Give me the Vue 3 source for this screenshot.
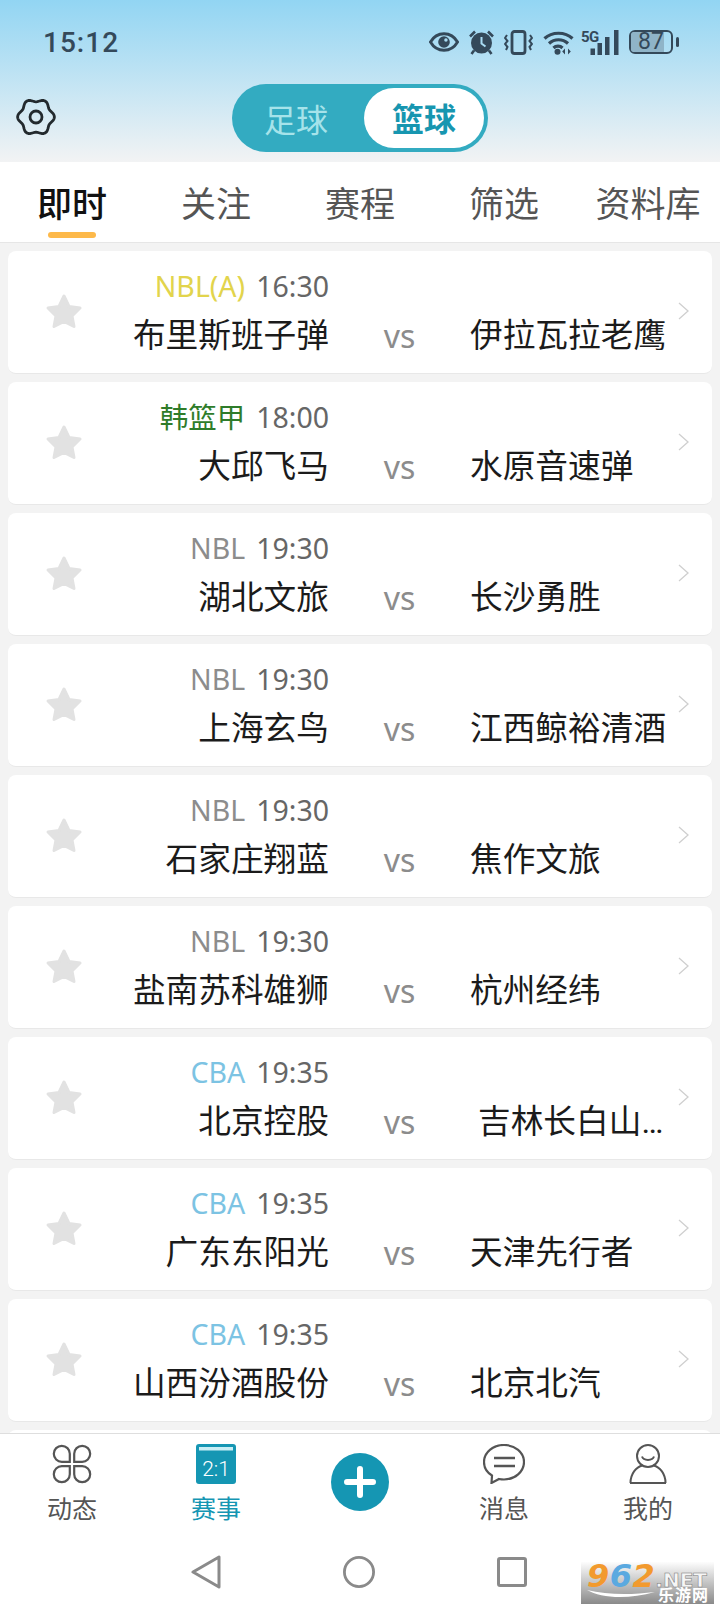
<script setup>
const tabs = ['即时', '关注', '赛程', '筛选', '资料库']

const matches = [
  { league: 'NBL(A)', color: '#e2d44c', time: '16:30', home: '布里斯班子弹', away: '伊拉瓦拉老鹰' },
  { league: '韩篮甲', color: '#2f7c2a', time: '18:00', home: '大邱飞马', away: '水原音速弹' },
  { league: 'NBL', color: '#8c8c8c', time: '19:30', home: '湖北文旅', away: '长沙勇胜' },
  { league: 'NBL', color: '#8c8c8c', time: '19:30', home: '上海玄鸟', away: '江西鲸裕清酒' },
  { league: 'NBL', color: '#8c8c8c', time: '19:30', home: '石家庄翔蓝', away: '焦作文旅' },
  { league: 'NBL', color: '#8c8c8c', time: '19:30', home: '盐南苏科雄狮', away: '杭州经纬' },
  { league: 'CBA', color: '#7cc3e3', time: '19:35', home: '北京控股', away: '吉林长白山…', cut: true },
  { league: 'CBA', color: '#7cc3e3', time: '19:35', home: '广东东阳光', away: '天津先行者' },
  { league: 'CBA', color: '#7cc3e3', time: '19:35', home: '山西汾酒股份', away: '北京北汽' },
]

// six soft lobes, same outline as the settings cog
let gearPath = ''
for (let i = 0; i <= 72; i++) {
  const a = (i / 72) * Math.PI * 2
  const r = 16.8 + 1.6 * Math.cos(6 * a)
  gearPath += (i ? 'L' : 'M') + (20 + r * Math.cos(a)).toFixed(2) + ' ' + (20 + r * Math.sin(a)).toFixed(2)
}
gearPath += 'Z'
</script>

<template>
  <div class="page">
    <header class="head">
      <div class="status">
        <span class="clock">15:12</span>
        <div class="status-icons">
          <svg width="30" height="20" viewBox="0 0 31 20">
            <path d="M1.5 10C5 4 10 1.5 15.5 1.5S26 4 29.5 10C26 16 21 18.5 15.5 18.5S5 16 1.5 10Z" fill="none" stroke="#34495a" stroke-width="3" />
            <circle cx="15.5" cy="10" r="6" fill="#34495a" />
            <circle cx="17.5" cy="8" r="1.8" fill="#a9dcf3" />
          </svg>
          <svg width="25" height="25" viewBox="0 0 25 25">
            <path d="M1 6.5 6 1.5M24 6.5 19 1.5" stroke="#34495a" stroke-width="2.6" fill="none" />
            <path d="M5 20.5 2.5 24M20 20.5 22.5 24" stroke="#34495a" stroke-width="2.6" fill="none" />
            <circle cx="12.5" cy="13" r="10.5" fill="#34495a" />
            <path d="M12.5 7v6.5l4 3" stroke="#a9dcf3" stroke-width="2" fill="none" />
          </svg>
          <svg width="29" height="25" viewBox="0 0 29 25">
            <rect x="8" y="1.5" width="13" height="22" rx="2.5" fill="none" stroke="#34495a" stroke-width="2.8" />
            <path d="M3 5 1 8l2.500 3L1 14l2.500 3L2 20M26 5l2 3-2.500 3 2.500 3-2.500 3 1.500 3" fill="none" stroke="#34495a" stroke-width="2" />
          </svg>
          <svg width="31" height="25" viewBox="0 0 31 25">
            <path d="M1.500 8.500C9 1.500 22 1.500 29.500 8.500M6 13.500C11.500 8.500 19.500 8.500 25 13.500M10.500 18C13 15.500 17 15.500 19.500 18" fill="none" stroke="#34495a" stroke-width="3.200" />
            <circle cx="14.500" cy="21.800" r="3" fill="#34495a" />
            <path d="M22 24.500v-6l-2.800 3zM25 18.500v6l2.800-3z" fill="#34495a" />
          </svg>
          <svg class="signal" width="38" height="25" viewBox="0 0 38 25">
            <text x="0" y="12" class="five-g">5G</text>
            <rect x="9.500" y="18.500" width="4.500" height="6.500" fill="#34495a" />
            <rect x="16.500" y="13" width="4.500" height="12" fill="#34495a" />
            <rect x="24" y="7" width="4.500" height="18" fill="#34495a" />
            <rect x="33" y="0" width="4.500" height="25" fill="#34495a" />
          </svg>
          <div class="battery">
            <div class="battery-fill"></div>
            <span class="battery-num">87</span>
          </div>
          <div class="battery-cap"></div>
        </div>
      </div>
      <div class="bar">
        <svg class="gear" width="40" height="40" viewBox="0 0 40 40">
          <path :d="gearPath" fill="none" stroke="#232a2e" stroke-width="2.800" stroke-linejoin="round" />
          <circle cx="20" cy="20" r="6" fill="none" stroke="#232a2e" stroke-width="2.800" />
        </svg>
        <div class="switch">
          <span class="switch-off">足球</span>
          <span class="switch-on">篮球</span>
        </div>
      </div>
    </header>

    <nav class="tabs">
      <div v-for="(t, i) in tabs" :key="t" class="tab" :class="{ active: i === 0 }">{{ t }}</div>
    </nav>

    <main class="list">
      <section v-for="(m, i) in matches" :key="i" class="card">
        <svg class="star" width="38" height="36" viewBox="0 0 38 36">
          <path d="M19 3 24 13.500 35 15 27 23 29 33.500 19 28.500 9 33.500 11 23 3 15 14 13.500Z" fill="#e2e2e2" stroke="#e2e2e2" stroke-width="3" stroke-linejoin="round" />
        </svg>
        <div class="meta">
          <span :style="{ color: m.color }">{{ m.league }}</span>
          <span class="time">{{ m.time }}</span>
        </div>
        <div class="home">{{ m.home }}</div>
        <div class="vs">vs</div>
        <div class="away" :class="{ cut: m.cut }">{{ m.away }}</div>
        <svg class="chev" width="11" height="18" viewBox="0 0 11 18">
          <path d="M1 1 10 9 1 17" fill="none" stroke="#cfcfcf" stroke-width="1.300" />
        </svg>
      </section>
      <section class="card"></section>
    </main>

    <footer class="foot">
      <div class="foot-tabs">
        <div class="foot-item">
          <svg width="40" height="40" viewBox="0 0 40 40" fill="none" stroke="#555" stroke-width="2.200">
            <path d="M17.800 17.800H9.800a8 8 0 1 1 8-8Z" />
            <path d="M22.200 17.800H30.200a8 8 0 1 0-8-8Z" />
            <path d="M17.800 22.200H9.800a8 8 0 1 0 8 8Z" />
            <path d="M22.200 22.200H30.200a8 8 0 1 1-8 8Z" />
          </svg>
          <span>动态</span>
        </div>
        <div class="foot-item on">
          <svg width="40" height="40" viewBox="0 0 40 40">
            <rect width="40" height="40" rx="3" fill="#1596b3" />
            <rect x="3" y="3" width="34" height="3.500" fill="#c9eef5" />
            <text x="20" y="32" text-anchor="middle" class="score">2:1</text>
          </svg>
          <span>赛事</span>
        </div>
        <div class="foot-item plus">
          <svg width="58" height="58" viewBox="0 0 58 58">
            <circle cx="29" cy="29" r="29" fill="#1596b3" />
            <path d="M16 29H42M29 16V42" stroke="#fff" stroke-width="6" stroke-linecap="round" />
          </svg>
        </div>
        <div class="foot-item">
          <svg width="42" height="40" viewBox="0 0 42 40" fill="none" stroke="#555" stroke-width="2.200">
            <path d="M21 1C10 1 1 8.500 1 18C1 24 4 28.500 9 31.500L8.500 39 16 35C17.500 35.300 19.500 35.500 21 35.500C32 35.500 41 27.500 41 18C41 8.500 32 1 21 1Z" />
            <path d="M11 14H32M11 22H32" stroke-width="2.400" />
          </svg>
          <span>消息</span>
        </div>
        <div class="foot-item">
          <svg width="38" height="40" viewBox="0 0 38 40" fill="none" stroke="#555" stroke-width="2">
            <circle cx="19" cy="12" r="11" />
            <path d="M13 12.500C14.500 17 23.500 17 25 12.500" />
            <path d="M1.500 39C1.500 30 7 23 13.500 21.500M36.500 39C36.500 30 31 23 24.500 21.500M1 39H37" />
          </svg>
          <span>我的</span>
        </div>
      </div>
      <div class="sys-nav">
        <svg width="30" height="34" viewBox="0 0 30 34" fill="none" stroke="#8a8a8a" stroke-width="3" stroke-linejoin="round">
          <path d="M2 17 28 2V32Z" />
        </svg>
        <svg width="32" height="32" viewBox="0 0 34 34" fill="none" stroke="#8a8a8a" stroke-width="3">
          <circle cx="17" cy="17" r="15.500" />
        </svg>
        <svg width="30" height="30" viewBox="0 0 30 30" fill="none" stroke="#8a8a8a" stroke-width="3" stroke-linejoin="round">
          <rect x="1.500" y="1.500" width="27" height="27" rx="1.500" />
        </svg>
      </div>
      <div class="mark">
        <div class="mark-top">
          <span class="mark-num"><i class="orange">9</i><i class="blue">6</i><i class="orange">2</i></span>
          <span class="mark-net">.NET</span>
        </div>
        <div class="mark-low">
          <svg width="68" height="12" viewBox="0 0 68 12">
            <path d="M0 1C14 9 40 11 68 3 44 6 20 6 0 1Z" fill="#fff" />
          </svg>
          <span>乐游网</span>
        </div>
      </div>
    </footer>
  </div>
</template>

<style>
html, body {
  margin: 0;
  background: #f3f3f3;
}
</style>

<style scoped>
.page {
  position: relative;
  display: flex;
  flex-direction: column;
  width: 720px;
  height: 1610px;
  overflow: hidden;
  background: #f3f3f3;
  font-family: "Noto Sans CJK SC", "Noto Sans", sans-serif;
}

.head {
  height: 162px;
  flex: none;
  box-sizing: border-box;
  background: linear-gradient(#92d5f3, #f2f3f4);
}

.status {
  display: flex;
  align-items: center;
  height: 84px;
  padding: 0 41px 0 43px;
}

.clock {
  font-family: Roboto, sans-serif;
  font-weight: 500;
  font-size: 28px;
  letter-spacing: 1px;
  color: #34495a;
}

.status-icons {
  display: flex;
  align-items: center;
  gap: 10px;
  margin-left: auto;
}

.signal {
  margin-left: -3px;
  overflow: visible;
}

.five-g {
  font-family: Roboto, sans-serif;
  font-weight: 700;
  font-size: 15px;
  letter-spacing: -0.5px;
  fill: #34495a;
}

.battery {
  position: relative;
  width: 44px;
  height: 24px;
  box-sizing: border-box;
  border: 2.500px solid #34495a;
  border-radius: 6px;
  display: flex;
  align-items: center;
  justify-content: center;
}

.battery-fill {
  position: absolute;
  left: 0;
  top: 0;
  bottom: 0;
  width: 82%;
  border-radius: 3px 0 0 3px;
  background: #8fb4c8;
}

.battery-num {
  position: relative;
  font-family: Roboto, sans-serif;
  font-size: 23px;
  line-height: 20px;
  color: #34495a;
}

.battery-cap {
  width: 3px;
  height: 10px;
  margin-left: -7px;
  border-radius: 2px;
  background: #34495a;
}

.bar {
  position: relative;
  display: flex;
  justify-content: center;
}

.gear {
  position: absolute;
  left: 16px;
  top: 13px;
}

.switch {
  display: flex;
  align-items: center;
  width: 256px;
  height: 68px;
  box-sizing: border-box;
  padding: 4px;
  border-radius: 34px;
  background: #33abc1;
}

.switch-off,
.switch-on {
  font-size: 32px;
  text-align: center;
}

.switch-off {
  flex: 1;
  padding-right: 8px;
  color: #a6e3ea;
}

.switch-on {
  width: 120px;
  height: 60px;
  line-height: 58px;
  border-radius: 30px;
  background: #fff;
  color: #1796b0;
  font-weight: 700;
}

.tabs {
  display: grid;
  grid-template-columns: repeat(5, 144px);
  flex: none;
  height: 81px;
  box-sizing: border-box;
  border-bottom: 1px solid #e6e6e6;
  background: #fff;
}

.tab {
  position: relative;
  text-align: center;
  font-size: 35px;
  line-height: 80px;
  color: #555;
}

.tab.active {
  color: #111;
  font-weight: 500;
}

.tab.active::after {
  content: "";
  position: absolute;
  left: 48px;
  top: 70px;
  width: 48px;
  height: 6px;
  border-radius: 3px;
  background: #fdb94a;
}

.list {
  flex: 1;
  min-height: 0;
  overflow: hidden;
  padding: 8px 8px 0;
}

.card {
  display: grid;
  grid-template-columns: 112px 209px 141px 201px 41px;
  grid-template-rows: 40px 40px;
  row-gap: 9px;
  align-items: center;
  height: 123px;
  box-sizing: border-box;
  padding-top: 16px;
  margin-bottom: 8px;
  border-radius: 8px;
  border-bottom: 1px solid #e8e8e8;
  background: #fff;
}

.star {
  grid-column: 1;
  grid-row: 1 / 3;
  justify-self: center;
  margin-top: -1px;
}

.meta {
  grid-column: 1 / 3;
  grid-row: 1;
  display: flex;
  justify-content: flex-end;
  gap: 11px;
  margin-top: -2px;
  font-family: "Noto Sans", "Noto Sans CJK SC", sans-serif;
  font-size: 28.500px;
  line-height: 40px;
}

.time {
  color: #666;
}

.home,
.away {
  grid-row: 2;
  font-family: Roboto, "Noto Sans CJK SC", sans-serif;
  font-size: 32.700px;
  line-height: 40px;
  color: #1b1b1b;
  white-space: nowrap;
}

.home {
  grid-column: 2;
  justify-self: end;
}

.vs {
  grid-column: 3;
  grid-row: 2;
  justify-self: center;
  font-family: "Noto Sans", sans-serif;
  font-size: 32px;
  line-height: 40px;
  color: #8c8c8c;
}

.away {
  grid-column: 4;
}

.away.cut {
  padding-left: 8px;
}

.chev {
  grid-column: 5;
  grid-row: 1 / 3;
  margin: -1px 0 0 7px;
}

.foot {
  position: relative;
  flex: none;
  height: 177px;
  box-sizing: border-box;
  border-top: 1px solid #dedede;
  background: #fff;
}

.foot-tabs {
  display: grid;
  grid-template-columns: repeat(5, 144px);
  height: 105px;
  box-sizing: border-box;
  padding-top: 10px;
}

.foot-item {
  display: flex;
  flex-direction: column;
  align-items: center;
  gap: 6px;
  font-size: 25px;
  line-height: 34px;
  color: #555;
}

.foot-item.on {
  color: #1596b3;
}

.foot-item.plus {
  padding-top: 9px;
}

.score {
  font-family: Roboto, sans-serif;
  font-weight: 300;
  font-size: 21px;
  fill: #fff;
}

.sys-nav {
  display: flex;
  align-items: center;
  gap: 122px;
  justify-content: center;
  padding: 16px 3px 0 0;
}

.mark {
  position: absolute;
  right: 6px;
  bottom: 6px;
  display: flex;
  flex-direction: column;
  width: 133px;
  height: 42px;
  box-sizing: border-box;
  padding: 2px 0 0 6px;
  background: linear-gradient(#fdfdfd, #8a8a8a);
  color: #fff;
}

.mark-top {
  display: flex;
  align-items: baseline;
  height: 23px;
}

.mark-num {
  font-family: "DejaVu Sans", sans-serif;
  font-weight: 700;
  font-size: 32px;
  line-height: 25px;
  letter-spacing: 0.500px;
}

.mark-num i {
  font-style: italic;
}

.orange {
  color: #f29a2e;
}

.blue {
  color: #5aa9e0;
}

.mark-net {
  font-family: "DejaVu Sans", sans-serif;
  font-weight: 700;
  font-size: 20px;
  line-height: 25px;
  color: #f6f6f6;
  -webkit-text-stroke: 0.500px #777;
}

.mark-low {
  display: flex;
  align-items: center;
  gap: 3px;
  height: 15px;
  font-size: 16px;
  font-weight: 700;
  line-height: 15px;
  letter-spacing: 1px;
}

.mark-low svg {
  flex: none;
}
</style>
